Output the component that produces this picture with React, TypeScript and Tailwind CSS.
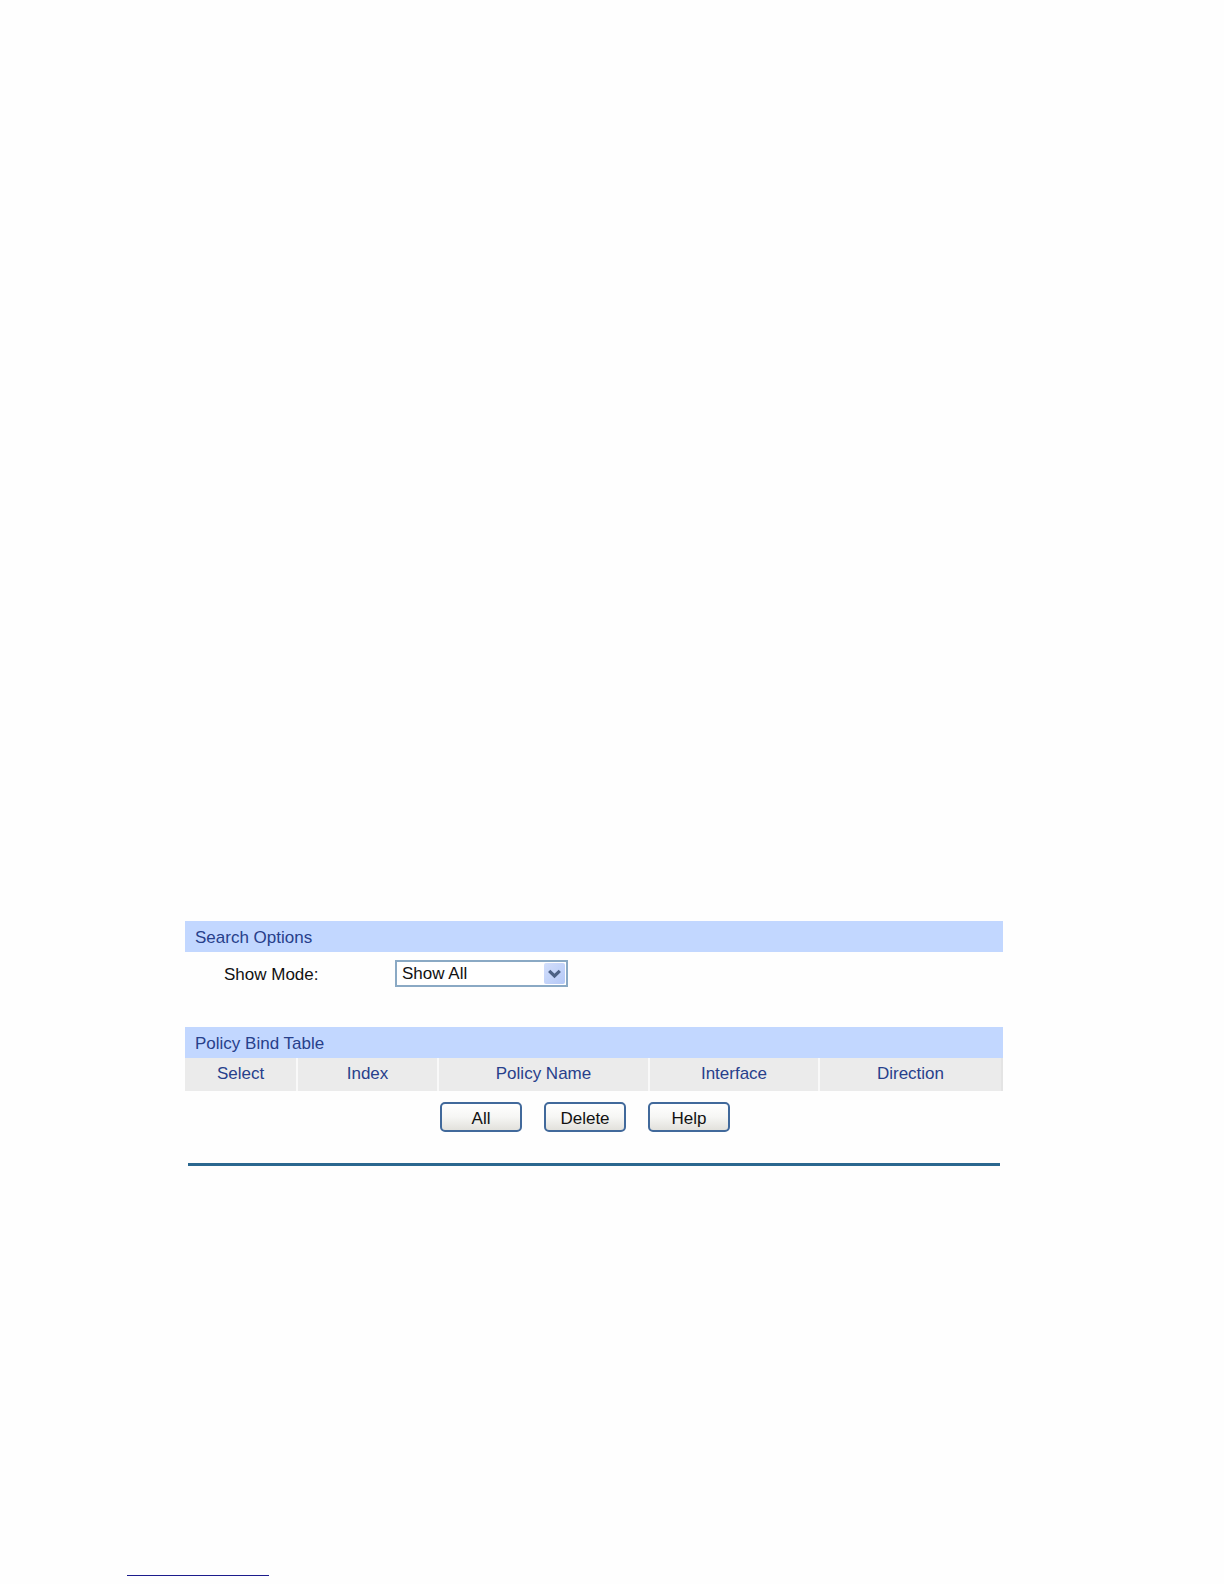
const columns = [
  { label: "Select", width: "w-[113px]" },
  { label: "Index", width: "w-[141px]" },
  { label: "Policy Name", width: "w-[211px]" },
  { label: "Interface", width: "w-[170px]" },
  { label: "Direction", width: "w-auto" },
];

const actions = ["All", "Delete", "Help"];

function SectionTitle({ children }: { children: string }) {
  return (
    <h2 className="h-[31px] bg-[#c2d7ff] px-2.5 leading-[33px] text-[#27408b]">
      {children}
    </h2>
  );
}

export default function App() {
  return (
    <div className="flex min-h-screen flex-col bg-[#fefefe] font-['Liberation_Sans',Arial,sans-serif] text-[17px] text-[#111]">
      <main className="mt-[921px] mr-[221px] ml-[185px]">
        <section>
          <SectionTitle>Search Options</SectionTitle>
          <div className="flex h-[75px] items-start pt-2 pl-[39px]">
            <label htmlFor="show-mode" className="w-[171px] leading-[29px]">
              Show Mode:
            </label>
            <div className="relative">
              <select
                id="show-mode"
                className="block h-[27px] w-[173px] appearance-none border-2 border-[#8aa9c4] bg-white pt-px pr-7 pl-[5px] leading-[22px]"
              >
                <option>Show All</option>
              </select>
              <span className="pointer-events-none absolute top-[3px] right-[3px] flex size-[21px] items-center justify-center rounded-xs bg-linear-to-br from-[#d3dffc] to-[#b4c8f6]">
                <svg viewBox="0 0 13 10" className="h-2.5 w-[13px]" fill="none" stroke="#4d6185" strokeWidth="3.2">
                  <path d="M1.2 1.8 6.5 7 11.8 1.8" />
                </svg>
              </span>
            </div>
          </div>
        </section>

        <section>
          <SectionTitle>Policy Bind Table</SectionTitle>
          <table className="w-full table-fixed border-separate border-spacing-0">
            <thead>
              <tr className="bg-[#ebebeb]">
                {columns.map((col) => (
                  <th
                    key={col.label}
                    className={`${col.width} h-[33px] border-r-2 border-[#f9f9f9] p-0 pb-0.5 leading-[31px] font-normal text-[#27408b] last:border-[#e4e4e4]`}
                  >
                    {col.label}
                  </th>
                ))}
              </tr>
            </thead>
          </table>
          <div className="mt-[11px] flex justify-center gap-[22px] pr-[18px]">
            {actions.map((action) => (
              <button
                key={action}
                type="button"
                className="h-[30px] w-[82px] rounded-[5px] border-2 border-[#41699b] bg-linear-to-b from-white via-[#f6f6f4] to-[#e2e1dc] pt-[3px] leading-[23px]"
              >
                {action}
              </button>
            ))}
          </div>
        </section>

        <hr className="mx-[3px] mt-[31px] border-t-3 border-[#2a678f]" />
      </main>

      <footer className="mt-auto mb-2 ml-[127px]">
        <hr className="w-[142px] border-[#1c1c8c]" />
      </footer>
    </div>
  );
}
